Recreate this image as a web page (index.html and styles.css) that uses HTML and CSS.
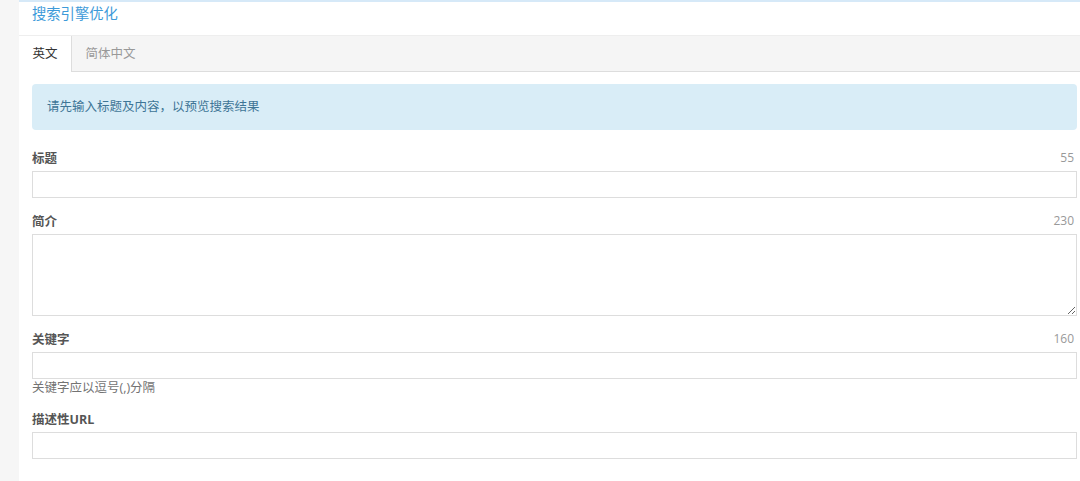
FILE: index.html
```html
<!DOCTYPE html>
<html lang="zh">
<head>
<meta charset="utf-8">
<title>搜索引擎优化</title>
<link rel="stylesheet" href="styles.css">
</head>
<body>
<div class="page">
  <div class="side"></div>
  <div class="panel">
    <div class="panel-head">搜索引擎优化</div>
    <div class="tabs">
      <div class="tab active">英文</div>
      <div class="tab">简体中文</div>
    </div>
    <div class="panel-body">
      <div class="alert">请先输入标题及内容，以预览搜索结果</div>
      <div class="group">
        <div class="label-row"><span class="label">标题</span><span class="count">55</span></div>
        <input class="field" type="text">
      </div>
      <div class="group">
        <div class="label-row"><span class="label">简介</span><span class="count">230</span></div>
        <textarea class="field area"></textarea>
      </div>
      <div class="group with-help">
        <div class="label-row"><span class="label">关键字</span><span class="count">160</span></div>
        <input class="field" type="text">
        <div class="help">关键字应以逗号(,)分隔</div>
      </div>
      <div class="group">
        <div class="label-row"><span class="label">描述性URL</span></div>
        <input class="field" type="text">
      </div>
    </div>
  </div>
</div>
</body>
</html>
```

FILE: styles.css
```css
html, body {
  margin: 0;
  padding: 0;
  background: #fff;
  overflow: hidden;
}
body {
  font-family: "Open Sans", "Noto Sans CJK SC", sans-serif;
  font-size: 12.5px;
  color: #555;
}
.page {
  display: flex;
  min-height: 481px;
}
.side {
  width: 19px;
  flex: none;
  background: #f6f6f6;
}
.panel {
  flex: 1;
  border-top: 2px solid #d6e9f8;
  background: #fff;
}
.panel-head {
  height: 33px;
  box-sizing: border-box;
  padding: 2px 0 0 13px;
  font-size: 14.3px;
  line-height: 20px;
  color: #3d9ad9;
}
.tabs {
  display: flex;
  height: 37px;
  box-sizing: border-box;
  background: #f5f5f5;
  border-top: 1px solid #eeeeee;
  border-bottom: 1px solid #dddddd;
}
.tab {
  padding: 0 13.5px;
  line-height: 35px;
  color: #999;
  font-size: 12.5px;
}
.tab.active {
  background: #fff;
  color: #333;
  border-right: 1px solid #dddddd;
  margin-bottom: -1px;
  height: 36px;
}
.panel-body {
  padding: 12px 3px 0 13px;
}
.alert {
  height: 46px;
  box-sizing: border-box;
  background: #d9edf7;
  border-radius: 4px;
  color: #3e7596;
  padding: 0 15px;
  line-height: 46px;
  font-size: 12.5px;
  margin-bottom: 18px;
}
.group {
  margin-bottom: 13px;
}
.group.with-help {
  margin-bottom: 12px;
}
.label-row {
  display: flex;
  justify-content: space-between;
  align-items: center;
  height: 18px;
  margin-bottom: 5px;
}
.label {
  font-weight: bold;
  color: #555;
  font-size: 12.5px;
}
.count {
  color: #999;
  font-size: 12px;
  padding-right: 3px;
}
.field {
  display: block;
  width: 100%;
  height: 27px;
  box-sizing: border-box;
  border: 1px solid #dddddd;
  margin: 0;
  padding: 4px 8px;
  background: #fff;
  font: inherit;
  outline: none;
}
.area {
  height: 82px;
  resize: vertical;
}
.help {
  color: #737373;
  font-size: 12.5px;
  line-height: 18px;
  margin-top: 0;
  margin-bottom: 0;
}
```
